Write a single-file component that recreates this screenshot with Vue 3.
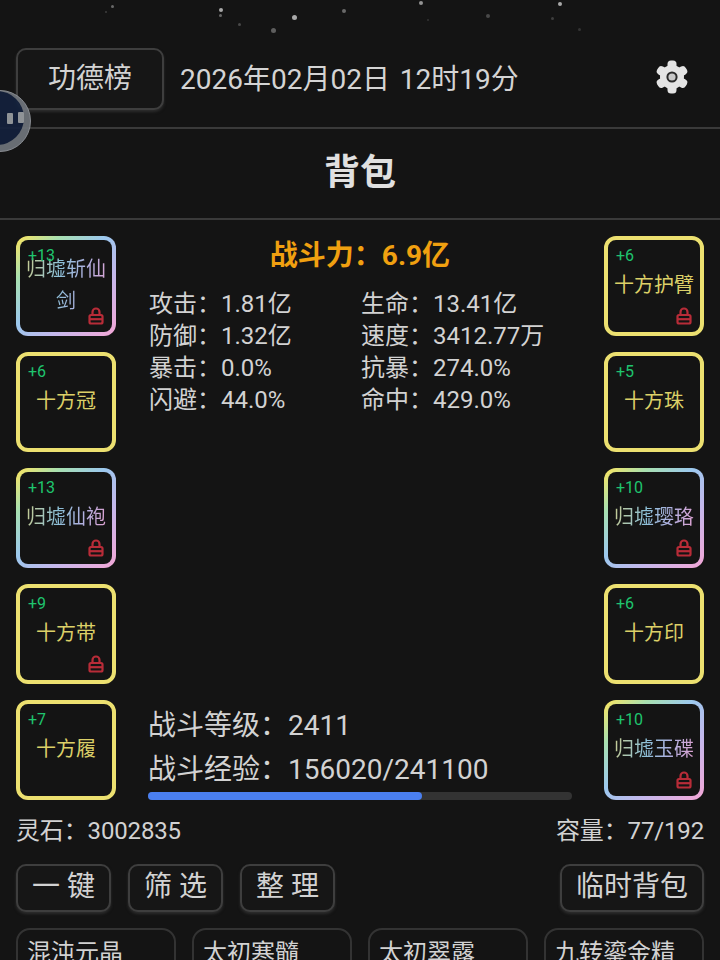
<script setup>
import { computed } from 'vue'

const stars = [
  { x: 111, y: 5, s: 3, o: 0.4 }, { x: 105, y: 11, s: 2, o: 0.2 },
  { x: 219, y: 8, s: 4, o: 0.7 }, { x: 219, y: 14, s: 3, o: 0.4 },
  { x: 292, y: 15, s: 5, o: 0.7 }, { x: 238, y: 23, s: 3, o: 0.25 },
  { x: 271, y: 28, s: 5, o: 0.35 }, { x: 342, y: 9, s: 4, o: 0.4 },
  { x: 419, y: 1, s: 4, o: 0.6 }, { x: 486, y: 14, s: 4, o: 0.25 },
  { x: 427, y: 19, s: 2, o: 0.15 }, { x: 558, y: 2, s: 4, o: 0.7 },
  { x: 551, y: 17, s: 3, o: 0.2 }, { x: 578, y: 28, s: 3, o: 0.15 },
]

const leftSlots = [
  { name: '归墟斩仙剑', level: 13, rare: true, locked: true },
  { name: '十方冠', level: 6, rare: false, locked: false },
  { name: '归墟仙袍', level: 13, rare: true, locked: true },
  { name: '十方带', level: 9, rare: false, locked: true },
  { name: '十方履', level: 7, rare: false, locked: false },
]

const rightSlots = [
  { name: '十方护臂', level: 6, rare: false, locked: true },
  { name: '十方珠', level: 5, rare: false, locked: false },
  { name: '归墟璎珞', level: 10, rare: true, locked: true },
  { name: '十方印', level: 6, rare: false, locked: false },
  { name: '归墟玉碟', level: 10, rare: true, locked: true },
]

const stats = [
  { label: '攻击', value: '1.81亿' }, { label: '生命', value: '13.41亿' },
  { label: '防御', value: '1.32亿' }, { label: '速度', value: '3412.77万' },
  { label: '暴击', value: '0.0%' }, { label: '抗暴', value: '274.0%' },
  { label: '闪避', value: '44.0%' }, { label: '命中', value: '429.0%' },
]

const exp = 156020
const expMax = 241100
const expPercent = computed(() => (exp / expMax) * 100 + '%')

const items = ['混沌元晶', '太初寒髓', '太初翠露', '九转鎏金精']
</script>

<template>
  <div class="page">
    <div class="stars">
      <i
        v-for="(star, i) in stars"
        :key="i"
        class="star"
        :style="{ left: star.x + 'px', top: star.y + 'px', width: star.s + 'px', height: star.s + 'px', opacity: star.o }"
      ></i>
    </div>

    <svg class="ball" width="32" height="64" viewBox="0 0 32 64">
      <circle cx="0" cy="32" r="30.5" fill="#70757c" stroke="#92969c" stroke-width="1" />
      <circle cx="-3" cy="29" r="27" fill="#13213d" />
      <rect x="7" y="24" width="6" height="11" rx="1" fill="#9a9ea3" />
      <rect x="18" y="23" width="6" height="11" rx="1" fill="#9a9ea3" />
    </svg>

    <header class="top-bar">
      <button class="btn rank-btn">功德榜</button>
      <span class="date">2026年02月02日 12时19分</span>
      <svg class="gear" width="34" height="34" viewBox="0 0 34 34">
        <g fill="#e4e4e4">
          <circle cx="17" cy="17" r="12" />
          <rect x="12.5" y="0.5" width="9" height="33" rx="3.5" />
          <rect x="12.5" y="0.5" width="9" height="33" rx="3.5" transform="rotate(60 17 17)" />
          <rect x="12.5" y="0.5" width="9" height="33" rx="3.5" transform="rotate(120 17 17)" />
        </g>
        <circle cx="17" cy="17" r="4.6" fill="#c8c8c8" stroke="#2a2a2a" stroke-width="2" />
      </svg>
    </header>

    <h1 class="title">背包</h1>

    <section class="equip">
      <div class="slot-col">
        <div v-for="slot in leftSlots" :key="slot.name" class="slot" :class="{ rare: slot.rare }">
          <span class="level">+{{ slot.level }}</span>
          <span class="slot-name">{{ slot.name }}</span>
          <svg v-if="slot.locked" class="lock" width="16" height="18" viewBox="0 0 16 18" fill="none" stroke="#b82c38" stroke-width="2.2">
            <path d="M4.5 8V5a3.5 3.5 0 0 1 7 0v3" />
            <rect x="1.5" y="8" width="13" height="8.5" rx="1.5" />
            <path d="M2 12.2h12" />
          </svg>
        </div>
      </div>

      <div class="center">
        <div class="power">战斗力：6.9亿</div>
        <div class="stats">
          <div v-for="stat in stats" :key="stat.label" class="stat">
            <span class="stat-label">{{ stat.label }}：</span>{{ stat.value }}
          </div>
        </div>
        <div class="battle">
          <div class="battle-line">战斗等级：2411</div>
          <div class="battle-line">战斗经验：{{ exp }}/{{ expMax }}</div>
          <div class="bar">
            <div class="bar-fill" :style="{ width: expPercent }"></div>
          </div>
        </div>
      </div>

      <div class="slot-col">
        <div v-for="slot in rightSlots" :key="slot.name" class="slot" :class="{ rare: slot.rare }">
          <span class="level">+{{ slot.level }}</span>
          <span class="slot-name">{{ slot.name }}</span>
          <svg v-if="slot.locked" class="lock" width="16" height="18" viewBox="0 0 16 18" fill="none" stroke="#b82c38" stroke-width="2.2">
            <path d="M4.5 8V5a3.5 3.5 0 0 1 7 0v3" />
            <rect x="1.5" y="8" width="13" height="8.5" rx="1.5" />
            <path d="M2 12.2h12" />
          </svg>
        </div>
      </div>
    </section>

    <div class="info-row">
      <span>灵石：3002835</span>
      <span>容量：77/192</span>
    </div>

    <div class="actions">
      <button class="btn action-btn">一 键</button>
      <button class="btn action-btn">筛 选</button>
      <button class="btn action-btn">整 理</button>
      <button class="btn temp-btn">临时背包</button>
    </div>

    <div class="items">
      <div v-for="item in items" :key="item" class="item">{{ item }}</div>
    </div>
  </div>
</template>

<style scoped>
.page {
  position: relative;
  height: 960px;
  overflow: hidden;
  background: #141414;
  color: #d2d2d2;
  font-family: Roboto, "Noto Sans CJK SC", sans-serif;
}

.stars {
  position: absolute;
  top: 0;
  left: 0;
  width: 100%;
  height: 48px;
}

.star {
  position: absolute;
  border-radius: 50%;
  background: #e8e8e8;
}

.ball {
  position: absolute;
  left: 0;
  top: 89px;
  z-index: 2;
  opacity: 0.92;
}

.top-bar {
  box-sizing: border-box;
  display: flex;
  align-items: center;
  height: 129px;
  padding: 48px 16px 17px;
  border-bottom: 2px solid #3a3a3a;
}

.btn {
  box-sizing: border-box;
  padding: 0 0 2px;
  background: #161616;
  border: 2px solid #3e3e3e;
  border-radius: 10px;
  box-shadow: 0 2px 3px rgba(70, 70, 70, 0.5);
  color: #d2d2d2;
  font-family: inherit;
  font-size: 28px;
  line-height: 1;
}

.rank-btn {
  width: 148px;
  height: 62px;
  padding-bottom: 0;
}

.date {
  margin-left: 16px;
  padding-bottom: 5px;
  font-size: 28px;
  word-spacing: 3px;
  color: #d4d4d4;
}

.gear {
  margin-left: auto;
  margin-right: 15px;
  margin-bottom: 4px;
}

.title {
  box-sizing: border-box;
  height: 91px;
  margin: 0;
  border-bottom: 2px solid #3a3a3a;
  font-size: 36px;
  font-weight: 700;
  line-height: 88px;
  text-align: center;
  color: #e0e0e0;
}

.equip {
  display: flex;
  justify-content: space-between;
  padding: 16px 16px 0;
}

.slot-col {
  display: flex;
  flex-direction: column;
  gap: 16px;
}

.slot {
  position: relative;
  box-sizing: border-box;
  display: flex;
  align-items: center;
  justify-content: center;
  width: 100px;
  height: 100px;
  padding: 0 6px 2px;
  border: 4px solid #ece070;
  border-radius: 12px;
  background: #141414;
}

.slot.rare {
  border-color: transparent;
  background:
    linear-gradient(#141414, #141414) padding-box,
    linear-gradient(135deg, #f2e468 3%, #a8e0b0 22%, #9cc8ee 45%, #c4b8ec 68%, #f0a8d8 97%) border-box;
}

.slot-name {
  font-size: 20px;
  line-height: 32px;
  text-align: center;
  color: #dcd068;
}

.rare .slot-name {
  background: linear-gradient(100deg, #c8cc90, #8cc0d8 40%, #b0b0e0 70%, #e0a0d0);
  -webkit-background-clip: text;
  background-clip: text;
  color: transparent;
}

.level {
  position: absolute;
  left: 8px;
  top: 6px;
  font-size: 16px;
  line-height: 20px;
  color: #1fc46e;
}

.lock {
  position: absolute;
  right: 8px;
  bottom: 7px;
}

.center {
  display: flex;
  flex: 1;
  flex-direction: column;
  padding: 0 32px;
}

.power {
  font-size: 28px;
  font-weight: 700;
  line-height: 40px;
  text-align: center;
  color: #f0a010;
}

.stats {
  display: grid;
  grid-template-columns: 212px 1fr;
  grid-auto-rows: 32px;
  margin-top: 12px;
  padding-left: 1px;
}

.stat {
  font-size: 24px;
  line-height: 32px;
  white-space: nowrap;
}

.battle {
  margin-top: auto;
}

.battle-line {
  font-size: 28px;
  line-height: 44px;
  white-space: nowrap;
}

.bar {
  height: 8px;
  border-radius: 4px;
  background: #333333;
}

.bar-fill {
  height: 100%;
  border-radius: 4px;
  background: #4a7ff0;
}

.info-row {
  display: flex;
  justify-content: space-between;
  margin-top: 14px;
  padding: 0 16px;
  font-size: 24px;
  line-height: 34px;
  letter-spacing: -0.15px;
}

.actions {
  display: flex;
  gap: 17px;
  margin-top: 16px;
  padding: 0 16px;
}

.action-btn {
  width: 95px;
  height: 48px;
}

.temp-btn {
  width: 144px;
  height: 48px;
  margin-left: auto;
}

.items {
  display: grid;
  grid-template-columns: repeat(4, 160px);
  gap: 16px;
  margin-top: 16px;
  padding: 0 16px;
}

.item {
  box-sizing: border-box;
  height: 80px;
  padding: 6px 0 0 9px;
  border: 2px solid #333333;
  border-radius: 14px;
  font-size: 24px;
  line-height: 34px;
  white-space: nowrap;
}
</style>

<style>
html,
body {
  background: #141414;
}
</style>
